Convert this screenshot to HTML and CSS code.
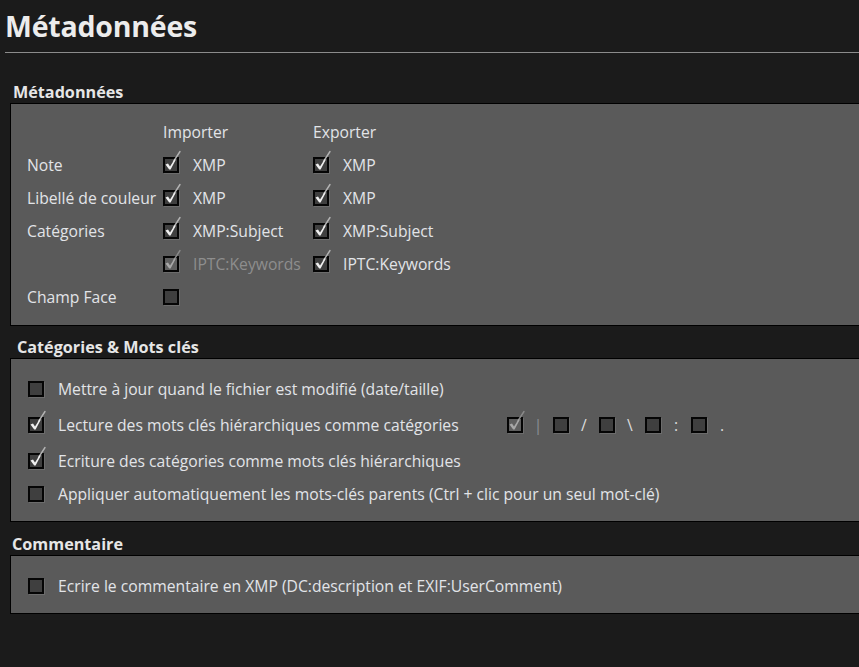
FILE: index.html
```html
<!DOCTYPE html>
<html lang="fr">
<head>
<meta charset="utf-8">
<title>Métadonnées</title>
<link rel="stylesheet" href="styles.css">
</head>
<body>
<header class="page-title"><h1>Métadonnées</h1></header>

<section class="group group-meta">
  <h2 class="group-title">Métadonnées</h2>
  <div class="panel">
    <div class="meta-grid">
      <span></span><span class="col-head">Importer</span><span class="col-head">Exporter</span>

      <span class="label">Note</span>
      <span class="opt"><span class="cb checked"><span class="box"></span><svg class="tick" viewBox="0 0 16 16"><path class="tail" d="M10.5 4.5 L17 -5.5" /><path class="mark" d="M2.5 7.5 L5 6.6 L7 9.6 L11.8 2 L12.6 3 L7.6 12.4 L6.2 12.4 Z" /></svg></span>XMP</span>
      <span class="opt"><span class="cb checked"><span class="box"></span><svg class="tick" viewBox="0 0 16 16"><path class="tail" d="M10.5 4.5 L17 -5.5" /><path class="mark" d="M2.5 7.5 L5 6.6 L7 9.6 L11.8 2 L12.6 3 L7.6 12.4 L6.2 12.4 Z" /></svg></span>XMP</span>

      <span class="label">Libellé de couleur</span>
      <span class="opt"><span class="cb checked"><span class="box"></span><svg class="tick" viewBox="0 0 16 16"><path class="tail" d="M10.5 4.5 L17 -5.5" /><path class="mark" d="M2.5 7.5 L5 6.6 L7 9.6 L11.8 2 L12.6 3 L7.6 12.4 L6.2 12.4 Z" /></svg></span>XMP</span>
      <span class="opt"><span class="cb checked"><span class="box"></span><svg class="tick" viewBox="0 0 16 16"><path class="tail" d="M10.5 4.5 L17 -5.5" /><path class="mark" d="M2.5 7.5 L5 6.6 L7 9.6 L11.8 2 L12.6 3 L7.6 12.4 L6.2 12.4 Z" /></svg></span>XMP</span>

      <span class="label">Catégories</span>
      <span class="opt"><span class="cb checked"><span class="box"></span><svg class="tick" viewBox="0 0 16 16"><path class="tail" d="M10.5 4.5 L17 -5.5" /><path class="mark" d="M2.5 7.5 L5 6.6 L7 9.6 L11.8 2 L12.6 3 L7.6 12.4 L6.2 12.4 Z" /></svg></span>XMP:Subject</span>
      <span class="opt"><span class="cb checked"><span class="box"></span><svg class="tick" viewBox="0 0 16 16"><path class="tail" d="M10.5 4.5 L17 -5.5" /><path class="mark" d="M2.5 7.5 L5 6.6 L7 9.6 L11.8 2 L12.6 3 L7.6 12.4 L6.2 12.4 Z" /></svg></span>XMP:Subject</span>

      <span></span>
      <span class="opt disabled"><span class="cb checked"><span class="box"></span><svg class="tick" viewBox="0 0 16 16"><path class="tail" d="M10.5 4.5 L17 -5.5" /><path class="mark" d="M2.5 7.5 L5 6.6 L7 9.6 L11.8 2 L12.6 3 L7.6 12.4 L6.2 12.4 Z" /></svg></span>IPTC:Keywords</span>
      <span class="opt"><span class="cb checked"><span class="box"></span><svg class="tick" viewBox="0 0 16 16"><path class="tail" d="M10.5 4.5 L17 -5.5" /><path class="mark" d="M2.5 7.5 L5 6.6 L7 9.6 L11.8 2 L12.6 3 L7.6 12.4 L6.2 12.4 Z" /></svg></span>IPTC:Keywords</span>

      <span class="label">Champ Face</span>
      <span class="opt"><span class="cb"><span class="box"></span></span></span>
      <span></span>
    </div>
  </div>
</section>

<section class="group group-cat">
  <h2 class="group-title">Catégories &amp; Mots clés</h2>
  <div class="panel">
    <ul class="rows">
      <li class="row"><span class="cb"><span class="box"></span></span><span class="row-text">Mettre à jour quand le fichier est modifié (date/taille)</span></li>
      <li class="row"><span class="cb checked"><span class="box"></span><svg class="tick" viewBox="0 0 16 16"><path class="tail" d="M10.5 4.5 L17 -5.5" /><path class="mark" d="M2.5 7.5 L5 6.6 L7 9.6 L11.8 2 L12.6 3 L7.6 12.4 L6.2 12.4 Z" /></svg></span><span class="row-text row-text-wide">Lecture des mots clés hiérarchiques comme catégories</span>
        <span class="seps">
          <span class="cb checked dim"><span class="box"></span><svg class="tick" viewBox="0 0 16 16"><path class="tail" d="M10.5 4.5 L17 -5.5" /><path class="mark" d="M2.5 7.5 L5 6.6 L7 9.6 L11.8 2 L12.6 3 L7.6 12.4 L6.2 12.4 Z" /></svg></span>
          <span class="sep sep-bar">|</span>
          <span class="cb"><span class="box"></span></span>
          <span class="sep">/</span>
          <span class="cb"><span class="box"></span></span>
          <span class="sep">\</span>
          <span class="cb"><span class="box"></span></span>
          <span class="sep">:</span>
          <span class="cb"><span class="box"></span></span>
          <span class="sep">.</span>
        </span>
      </li>
      <li class="row"><span class="cb checked"><span class="box"></span><svg class="tick" viewBox="0 0 16 16"><path class="tail" d="M10.5 4.5 L17 -5.5" /><path class="mark" d="M2.5 7.5 L5 6.6 L7 9.6 L11.8 2 L12.6 3 L7.6 12.4 L6.2 12.4 Z" /></svg></span><span class="row-text">Ecriture des catégories comme mots clés hiérarchiques</span></li>
      <li class="row row-last"><span class="cb"><span class="box"></span></span><span class="row-text">Appliquer automatiquement les mots-clés parents (Ctrl + clic pour un seul mot-clé)</span></li>
    </ul>
  </div>
</section>

<section class="group group-com">
  <h2 class="group-title">Commentaire</h2>
  <div class="panel">
    <ul class="rows">
      <li class="row"><span class="cb"><span class="box"></span></span><span class="row-text">Ecrire le commentaire en XMP (DC:description et EXIF:UserComment)</span></li>
    </ul>
  </div>
</section>
</body>
</html>
```

FILE: styles.css
```css
html, body {
  margin: 0;
  padding: 0;
  background: #1b1b1b;
  color: #e2e4e8;
  font-family: "Open Sans", "Noto Sans", sans-serif;
  font-size: 15.7px;
  overflow: hidden;
}

.page-title {
  margin-left: 5px;
  height: 53px;
  border-bottom: 1px solid #8c8c8c;
  box-sizing: border-box;
}

.page-title h1 {
  margin: 0;
  padding: 6px 0 0 0;
  font-size: 28.5px;
  line-height: 40px;
  font-weight: 700;
  color: #ececec;
  letter-spacing: -0.2px;
}

.group-title {
  margin: 0;
  font-size: 16.2px;
  font-weight: 700;
  line-height: 20px;
  color: #e6e6e6;
  white-space: nowrap;
}

.group-meta .group-title { padding: 29px 0 1px 13px; }
.group-cat .group-title { padding: 11px 0 1px 17px; }
.group-com .group-title { padding: 12px 0 1px 12px; }

.panel {
  margin-left: 10px;
  background: #5a5a5a;
  border-top: 1px solid #000;
  border-left: 1px solid #000;
  border-bottom: 1px solid #000;
  box-sizing: border-box;
}

.group-meta .panel { height: 223px; padding-top: 11px; }
.group-cat .panel { height: 164px; padding-top: 12px; }
.group-com .panel { height: 59px; padding-top: 15px; }

.meta-grid {
  display: grid;
  grid-template-columns: 136px 150px 1fr;
  grid-auto-rows: 33px;
  padding-left: 16px;
}

.label, .col-head, .opt {
  display: flex;
  align-items: center;
  white-space: nowrap;
}

.opt .cb { margin-right: 14px; }

.disabled { color: #8e8e8e; }

.rows {
  list-style: none;
  margin: 0;
  padding: 0 0 0 17px;
}

.row {
  display: flex;
  align-items: center;
  height: 36px;
  white-space: nowrap;
}

.row-last { height: 30px; }
.group-com .row { height: 30px; }

.row > .cb { margin-right: 14px; }

.row-text-wide { width: 449px; }

.seps {
  display: flex;
  align-items: center;
}

.sep {
  display: inline-block;
  width: 30px;
  text-align: center;
  color: #dcdcdc;
}

.sep-bar { color: #8a8e94; }

/* checkbox */
.cb {
  position: relative;
  display: inline-block;
  width: 16px;
  height: 16px;
  flex: none;
}

.cb .box {
  position: absolute;
  left: 0;
  top: 0;
  width: 12px;
  height: 12px;
  border: 2px solid #050505;
  background: #3f3f3f;
  box-shadow: 1px 1px 0 #6c6c6c;
}

.cb .tick {
  position: absolute;
  left: 0;
  top: 0;
  width: 16px;
  height: 16px;
  overflow: visible;
}

.cb .tick .mark {
  fill: #f0f0f0;
}

.cb .tick .tail {
  fill: none;
  stroke: #b4b4b4;
  stroke-width: 1.4;
  stroke-linecap: round;
}

.disabled .cb .tick .mark,
.cb.dim .tick .mark {
  fill: #a8a8a8;
}

.disabled .cb .tick .tail,
.cb.dim .tick .tail {
  stroke: #8a8a8a;
}

.disabled .cb .box,
.cb.dim .box { background: #5f5f5f; }
```
